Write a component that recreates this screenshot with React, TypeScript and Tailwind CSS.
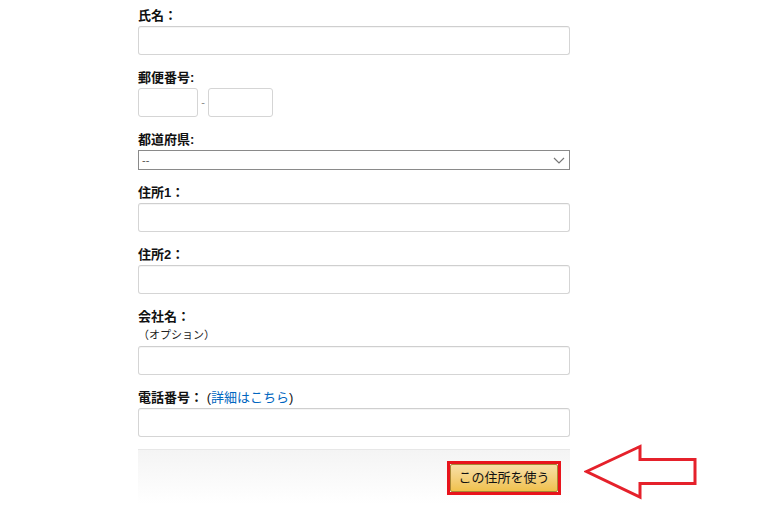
import type { ReactNode } from "react";

const font = { fontFamily: '"Liberation Sans", Arial, "Noto Sans CJK JP", sans-serif' };

function Field({ label, children }: { label: ReactNode; children: ReactNode }) {
  return (
    <div className="flex flex-col">
      <div className="text-[13px] font-bold leading-[19px] text-[#111]">{label}</div>
      {children}
    </div>
  );
}

function TextInput({ className = "w-full" }: { className?: string }) {
  return (
    <input
      type="text"
      className={`mt-[1px] h-[29px] rounded-[3px] border border-[#d5d5d5] border-t-[#cfcfcf] bg-white shadow-[inset_0_1px_0_rgba(0,0,0,0.04)] outline-none ${className}`}
    />
  );
}

export default function App() {
  return (
    <div className="relative h-[521px] w-[768px] overflow-hidden bg-white" style={font}>
      <div className="ml-[138px] flex w-[432px] flex-col gap-[13px] pt-[6px]">
        <Field label="氏名：">
          <TextInput />
        </Field>

        <Field label="郵便番号:">
          <div className="mt-[1px] flex items-center">
            <input type="text" className="h-[29px] w-[60px] rounded-[3px] border border-[#d5d5d5] bg-white outline-none" />
            <span className="w-[10px] text-center text-[11px] leading-none text-[#888]">-</span>
            <input type="text" className="h-[29px] w-[65px] rounded-[3px] border border-[#d5d5d5] bg-white outline-none" />
          </div>
        </Field>

        <Field label="都道府県:">
          <div className="mt-[1px] flex h-[20px] w-full items-center justify-between border border-[#8a8a8a] bg-white pl-[3px] pr-[4px]">
            <span className="text-[11px] leading-none text-[#555]">--</span>
            <svg width="12" height="7" viewBox="0 0 12 7" fill="none" stroke="#777" strokeWidth="1.2">
              <path d="M1 1l5 5 5-5" />
            </svg>
          </div>
        </Field>

        <Field label="住所1：">
          <TextInput />
        </Field>

        <Field label="住所2：">
          <TextInput />
        </Field>

        <Field
          label={
            <>
              会社名：
              <div className="text-[11px] font-normal leading-[19px] text-[#222]">（オプション）</div>
            </>
          }
        >
          <TextInput />
        </Field>

        <Field
          label={
            <>
              電話番号：{" "}
              <span className="font-normal text-[#111]">
                (<span className="text-[#0066c0]">詳細はこちら</span>)
              </span>
            </>
          }
        >
          <TextInput />
        </Field>

        <div className="-mt-[1px] flex h-[55px] justify-end border-t border-[#e7e7e7] bg-gradient-to-b from-[#f4f4f4] to-white pr-[9px] pt-[11px]">
          <div className="h-[34px] border-[3px] border-[#e8141c]">
            <button className="flex h-[28px] w-[108px] items-center justify-center rounded-[2px] border border-[#a88734] bg-gradient-to-b from-[#f7dfa5] to-[#f0c14b] text-[13px] text-[#111]">
              この住所を使う
            </button>
          </div>
        </div>
      </div>

      <svg
        className="absolute left-[584px] top-[444px]"
        width="114"
        height="56"
        viewBox="0 0 114 56"
        fill="white"
        stroke="#e5212b"
        strokeWidth="3"
        strokeLinejoin="miter"
      >
        <path d="M2.5 27.5L56 2.5V15.5H111V39.5H56V53Z" />
      </svg>
    </div>
  );
}
